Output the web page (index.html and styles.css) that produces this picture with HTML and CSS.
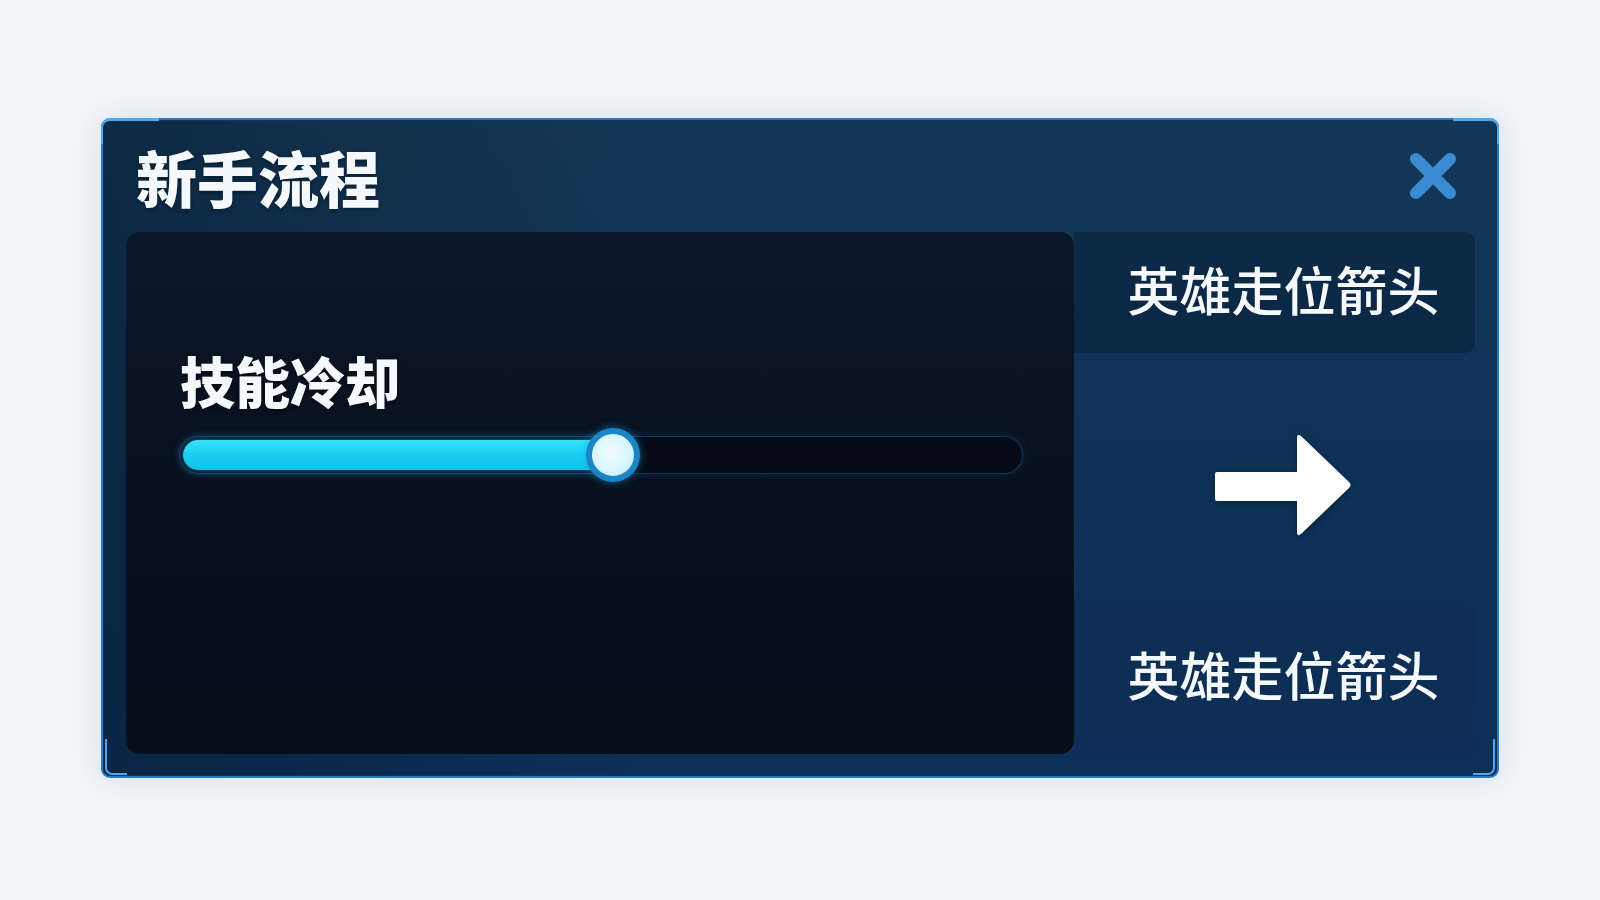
FILE: index.html
```html
<!DOCTYPE html>
<html lang="zh-CN">
	<head>
		<meta charset="utf-8" />
		<title>新手流程</title>
		<meta name="viewport" content="width=device-width, initial-scale=1" />
		<link rel="stylesheet" href="styles.css">
	</head>
	<body>
		<div class="stage">
			<div class="panel">
				<span class="corner tl"></span>
				<span class="corner tr"></span>
				<span class="corner bl"></span>
				<span class="corner br"></span>

				<div class="panel-head">
					<h1 class="panel-title">新手流程</h1>
					<button class="close" type="button" aria-label="关闭">
						<svg viewBox="0 0 52 52" width="52" height="52">
							<path d="M9 9 L43 43 M43 9 L9 43" stroke="#3a8bd2" stroke-width="12" stroke-linecap="round" fill="none" />
						</svg>
					</button>
				</div>

				<div class="panel-body">
					<div class="preview">
						<div class="setting-label">技能冷却</div>
						<div class="track">
							<div class="fill" style="width: 51.4%">
								<span class="thumb"></span>
							</div>
						</div>
					</div>

					<div class="side">
						<div class="side-box top">英雄走位箭头</div>
						<div class="side-arrow">
							<svg viewBox="0 0 138 106" width="138" height="106">
								<path d="M2 40 H82 V6 Q82 1 86 4 L134 50 Q137 53 134 56 L86 102 Q82 105 82 100 V69 H2 Q0 69 0 67 V42 Q0 40 2 40 Z" fill="#ffffff" />
							</svg>
						</div>
						<div class="side-box bottom">英雄走位箭头</div>
					</div>
				</div>
			</div>
		</div>
	</body>
</html>
```

FILE: styles.css
```css
* { box-sizing: border-box; }

html,
body {
	margin: 0;
	height: 100%;
	background: #f4f5f6;
	font-family: "Noto Sans CJK SC", "Noto Sans", sans-serif;
	color: #f6f9fc;
}

.stage {
	padding-top: 118px;
}

.panel {
	position: relative;
	width: 1398px;
	height: 660px;
	margin: 0 auto;
	border: 2px solid #2a76bf;
	border-radius: 9px;
	background:
		linear-gradient(90deg, rgba(8, 24, 44, 0.45) 0%, rgba(8, 24, 44, 0) 40%),
		linear-gradient(180deg, #133857 0%, #0f3457 40%, #0c2f58 100%);
	box-shadow: 0 0 28px rgba(110, 170, 235, 0.28), inset 0 0 0 1px rgba(20, 50, 90, 0.8);
	display: flex;
	flex-direction: column;
}

/* lighter corner accents */
.corner {
	position: absolute;
	width: 58px;
	height: 26px;
	border: 0 solid #4fa6ec;
}
.corner.tl { top: -2px; left: -2px; border-top-width: 3px; border-left-width: 2px; border-top-left-radius: 9px; }
.corner.tr { top: -2px; right: -2px; width: 46px; border-top-width: 3px; border-right-width: 2px; border-top-right-radius: 9px; }
.corner.bl { bottom: 1px; left: 2px; width: 22px; height: 36px; border-bottom-width: 2px; border-left-width: 2px; border-bottom-left-radius: 7px; }
.corner.br { bottom: 1px; right: 2px; width: 22px; height: 36px; border-bottom-width: 2px; border-right-width: 2px; border-bottom-right-radius: 7px; }

.panel-head {
	height: 112px;
	display: flex;
	align-items: center;
	justify-content: space-between;
	padding: 0 38px 0 33px;
}

.panel-title {
	margin: 0;
	font-size: 61px;
	line-height: 1;
	font-weight: 900;
	text-shadow: 0 2px 4px rgba(0, 0, 0, 0.35);
}

.close {
	margin: 0;
	padding: 0;
	border: 0;
	background: none;
	width: 52px;
	height: 52px;
	cursor: pointer;
}
.close svg { display: block; }

.panel-body {
	flex: 1;
	display: flex;
	padding: 0 22px 22px 23px;
}

.preview {
	width: 948px;
	border-radius: 14px;
	background: linear-gradient(180deg, #0b1627 0%, #08111f 50%, #060e1a 100%);
	padding: 120px 52px 0 54px;
}

.setting-label {
	font-size: 55px;
	line-height: 1;
	font-weight: 900;
	text-shadow: 0 2px 4px rgba(0, 0, 0, 0.4);
}

.track {
	margin-top: 30px;
	height: 36px;
	padding: 3px;
	border-radius: 18px;
	background: #040b17;
	box-shadow: 0 0 0 1px rgba(40, 100, 160, 0.35), 0 0 10px rgba(30, 90, 150, 0.35);
}

.fill {
	position: relative;
	height: 30px;
	border-radius: 15px;
	background: linear-gradient(180deg, #35e2fb 0%, #1bcdf0 50%, #14c2ea 100%);
	box-shadow: 0 0 10px rgba(40, 200, 250, 0.55);
}

.thumb {
	position: absolute;
	right: -27px;
	top: 50%;
	width: 54px;
	height: 54px;
	margin-top: -27px;
	border-radius: 50%;
	border: 6px solid #1b86c6;
	background: radial-gradient(circle at 45% 45%, #f2fdff 0%, #d4f5ff 60%, #b5eafb 100%);
	box-shadow: 0 0 8px rgba(30, 150, 220, 0.6);
}

.side {
	flex: 1;
	display: flex;
	flex-direction: column;
}

.side-box {
	display: flex;
	align-items: center;
	justify-content: center;
	font-size: 52px;
	line-height: 1;
	font-weight: 500;
	padding-left: 18px;
}

.side-box.top {
	height: 121px;
	border-radius: 0 10px 10px 0;
	background: rgba(6, 26, 50, 0.45);
	padding-bottom: 8px;
}

.side-box.bottom {
	height: 154px;
	border-radius: 0 10px 10px 0;
	background: rgba(14, 44, 80, 0.3);
	padding-bottom: 6px;
}

.side-arrow {
	flex: 1;
	display: flex;
	align-items: center;
	justify-content: center;
	padding: 16px 0 0 18px;
}
.side-arrow svg {
	display: block;
	filter: drop-shadow(0 2px 4px rgba(0, 0, 0, 0.35));
}
```
